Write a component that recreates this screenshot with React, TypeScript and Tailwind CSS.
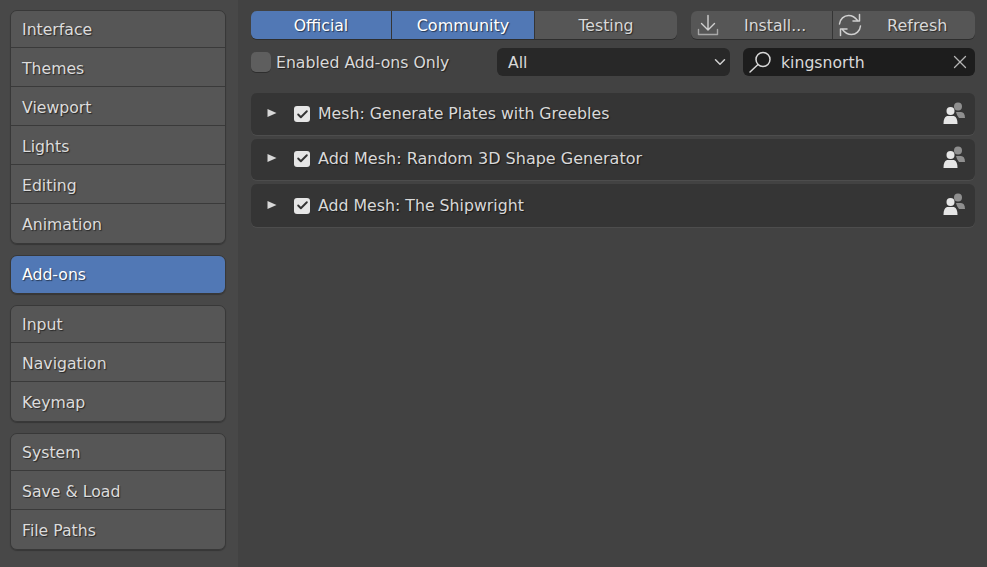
import React from "react";
import { Check, ChevronDown, X } from "lucide-react";

const groups = [
  ["Interface", "Themes", "Viewport", "Lights", "Editing", "Animation"],
  ["Add-ons"],
  ["Input", "Navigation", "Keymap"],
  ["System", "Save & Load", "File Paths"],
];

const addons = [
  { name: "Mesh: Generate Plates with Greebles", row: "h-[42px]", label: "text-[15.75px]" },
  { name: "Add Mesh: Random 3D Shape Generator", row: "h-[41px] pb-[2px]", label: "text-[16px]" },
  { name: "Add Mesh: The Shipwright", row: "h-[43px]", label: "text-[15.75px]" },
];

const shadow = "[text-shadow:1px_1px_1px_rgba(0,0,0,0.55)]";

const CommunityIcon = () => (
  <svg width="24" height="24" viewBox="0 0 24 24" className="mb-[3px]">
    <circle cx="16" cy="5.500" r="4" fill="#8f8f8f" />
    <path d="M14 11h5c2.500 0 4 2 4 6h-6l-2-3z" fill="#8f8f8f" />
    <circle cx="8.500" cy="10" r="4" fill="#e6e6e6" />
    <path d="M1.500 23c0-4.500 1-7 3.500-8h7c2.500 1 3.500 3.500 3.500 8z" fill="#e6e6e6" />
  </svg>
);

const InstallIcon = () => (
  <svg width="24" height="24" viewBox="0 0 24 24" fill="none" stroke="#d0d0d0" strokeWidth="1.4" strokeLinecap="round" strokeLinejoin="round">
    <path d="M12 2.500v14M5.500 10.500l6.500 6.500 6.500-6.500" />
    <path d="M2.500 16.500v5h19v-5" stroke="#a8a8a8" />
  </svg>
);

const RefreshIcon = () => (
  <svg width="24" height="24" viewBox="0 0 24 24" fill="none" stroke="#d0d0d0" strokeWidth="1.5" strokeLinecap="round" strokeLinejoin="round">
    <path d="M1.500 11c.5-5 4.500-8.500 9-8.500 3.500 0 6.500 1.500 9 5" />
    <path d="M21.500 1.500v6.500h-6.500" />
    <path d="M22.500 13c-.5 5-4.500 8.500-9 8.500-3.500 0-6.500-1.500-9-5" />
    <path d="M2.500 22.500v-6.500h6.500" />
  </svg>
);

const SearchIcon = () => (
  <svg width="24" height="24" viewBox="0 0 24 24" fill="none" stroke="#d8d8d8" strokeWidth="1.5" strokeLinecap="round">
    <circle cx="15" cy="9.500" r="7" />
    <path d="M10 14.500L2 22" />
  </svg>
);

export default function App() {
  return (
    <div className="flex h-[567px] w-[987px] overflow-hidden bg-[#424242] font-['DejaVu_Sans',sans-serif] text-[15.7px] text-[#d9d9d9]">
      <aside className="flex h-full w-[238px] shrink-0 flex-col gap-[11px] bg-[#484848] pl-[10px] pr-[12px] pt-[10px]">
        {groups.map((group) => (
          <div
            key={group[0]}
            className="flex flex-col divide-y divide-[#3a3a3a] overflow-hidden rounded-[7px] border border-[#383838] shadow-[0_1px_1px_rgba(0,0,0,0.25)]"
          >
            {group.map((item) => (
              <div
                key={item}
                className={`flex h-[39px] items-center pl-[11px] first:h-[37px] ${shadow} ${
                  item === "Add-ons"
                    ? "bg-[#5178b5] text-white"
                    : "bg-[#565656] pt-[4px] text-[#dcdcdc] first:pt-[2px] last:pt-[2px]"
                }`}
              >
                {item}
              </div>
            ))}
          </div>
        ))}
      </aside>

      <main className="flex min-w-0 flex-1 flex-col pl-[13px] pr-[12px] pt-[11px]">
        <div className="flex h-[28px] items-stretch gap-[14px]">
          <div className="flex w-[426px] divide-x divide-[#353535] overflow-hidden rounded-[6px] text-center shadow-[0_1px_0_rgba(0,0,0,0.3)]">
            <div className={`flex w-[141px] items-center justify-center bg-[#5178b5] pt-[1px] text-white ${shadow}`}>Official</div>
            <div className={`flex w-[143px] items-center justify-center bg-[#5178b5] pt-[1px] text-[16px] text-white ${shadow}`}>Community</div>
            <div className={`flex flex-1 items-center justify-center bg-[#565656] pt-[1px] ${shadow}`}>Testing</div>
          </div>
          <div className="flex flex-1 divide-x divide-[#353535] overflow-hidden rounded-[6px] bg-[#565656] shadow-[0_1px_0_rgba(0,0,0,0.3)]">
            <div className="flex w-[142px] items-center pl-[5px]">
              <InstallIcon />
              <span className={`ml-[24px] pt-[1px] ${shadow}`}>Install...</span>
            </div>
            <div className="flex flex-1 items-center pl-[5px]">
              <RefreshIcon />
              <span className={`ml-[25px] pt-[1px] text-[16px] ${shadow}`}>Refresh</span>
            </div>
          </div>
        </div>

        <div className="mt-[9px] flex h-[28px] items-center">
          <div className="h-[20px] w-[20px] rounded-[5px] bg-[#5e5e5e] shadow-[0_1px_0_rgba(0,0,0,0.3)]" />
          <span className={`ml-[5px] w-[221px] pt-[1px] ${shadow}`}>Enabled Add-ons Only</span>
          <div className="flex h-[28px] w-[233px] items-center justify-between rounded-[6px] bg-[#282828] pl-[11px] pr-[1px]">
            <span className="pt-[1px]">All</span>
            <ChevronDown size={18} strokeWidth={2} className="text-[#d0d0d0]" />
          </div>
          <div className="ml-[13px] flex h-[28px] w-[232px] items-center rounded-[6px] bg-[#1d1d1d] pl-[5px] pr-[4px]">
            <SearchIcon />
            <span className="ml-[9px] flex-1 pt-[1px]">kingsnorth</span>
            <X size={22} strokeWidth={1.4} className="text-[#b5b5b5]" />
          </div>
        </div>

        <div className="mt-[17px] flex flex-col gap-[4px]">
          {addons.map((addon) => (
            <div
              key={addon.name}
              className={`flex ${addon.row} items-center rounded-[6px] bg-[#353535] pr-[9px] shadow-[0_1px_0_rgba(255,255,255,0.06)]`}
            >
              <svg width="10" height="10" viewBox="0 0 10 10" className="mb-[2px] ml-[16px]">
                <path d="M0.500 1L9.500 5L0.500 9z" fill="#d8d8d8" />
              </svg>
              <div className="ml-[17px] flex h-[16px] w-[16px] items-center justify-center rounded-[3px] bg-[#e6e6e6]">
                <Check size={13} strokeWidth={3.5} className="text-[#333333]" />
              </div>
              <span className={`ml-[8px] flex-1 ${addon.label} ${shadow}`}>{addon.name}</span>
              <CommunityIcon />
            </div>
          ))}
        </div>
      </main>
    </div>
  );
}
